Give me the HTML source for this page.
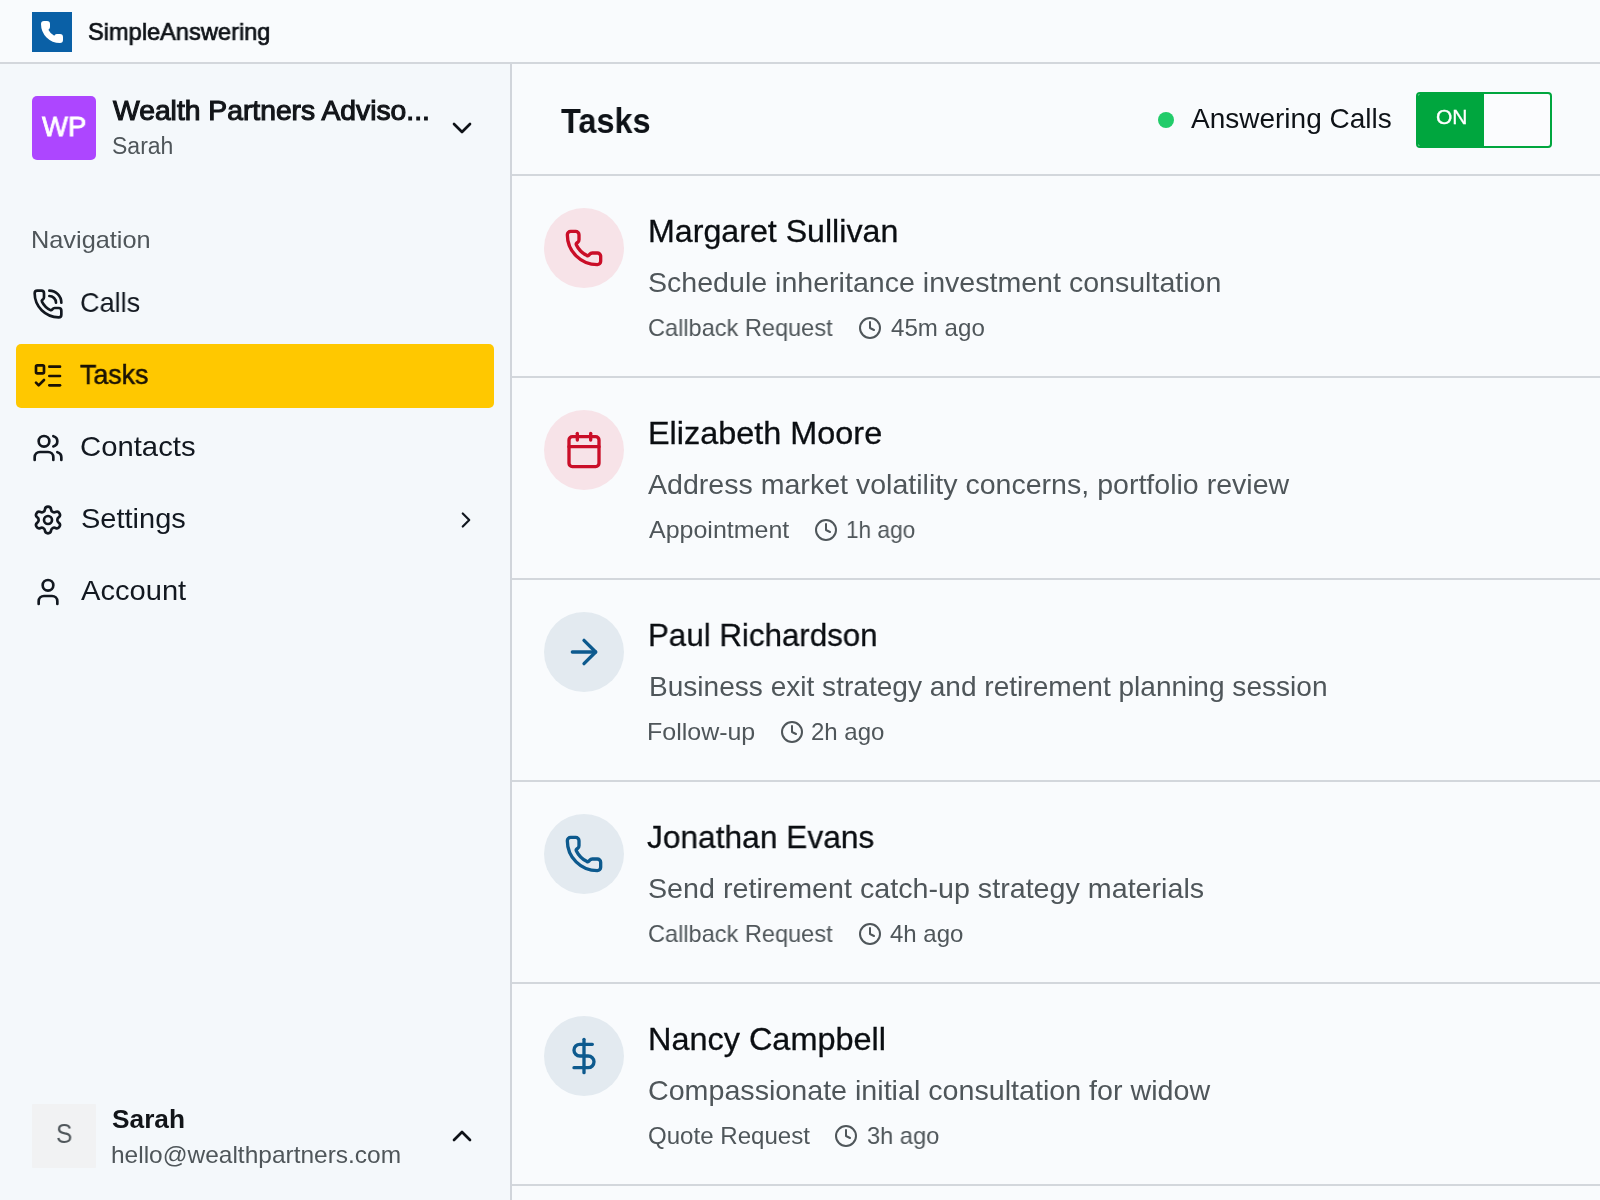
<!DOCTYPE html>
<html><head><meta charset="utf-8"><title>SimpleAnswering - Tasks</title>
<style>
html,body{margin:0;padding:0;width:1600px;height:1200px;overflow:hidden;background:#f9fbfd;font-family:"Liberation Sans", sans-serif;}
.t{position:absolute;white-space:nowrap;transform-origin:0 0;will-change:transform;}
.ic{position:absolute;overflow:visible;}
#hdr{position:absolute;left:0;top:0;width:1600px;height:62px;background:#f9fbfd;border-bottom:2px solid #d3d7dc;}
#logo{position:absolute;left:32px;top:12px;width:40px;height:40px;background:#0a60a6;}
#side{position:absolute;left:0;top:64px;width:510px;height:1136px;background:#f4f8fb;border-right:2px solid #d1d5db;}
#org{position:absolute;left:32px;top:96px;width:64px;height:64px;border-radius:5px;background:#ad46ff;}
#hl{position:absolute;left:16px;top:344px;width:478px;height:64px;border-radius:5px;background:#ffc800;}
#uav{position:absolute;left:32px;top:1104px;width:64px;height:64px;border-radius:1px;background:#f1f2f3;}
#mh{position:absolute;left:512px;top:174px;width:1088px;height:2px;background:#d3d7dc;}
.rb{position:absolute;left:512px;width:1088px;height:2px;background:#d3d7dc;}
.circ{position:absolute;left:544px;width:80px;height:80px;border-radius:50%;}
#dot{position:absolute;left:1158px;top:112px;width:16px;height:16px;border-radius:50%;background:#22cc6a;}
#tog{position:absolute;left:1416px;top:92px;width:132px;height:52px;border:2px solid #00a63e;border-radius:4px;background:#fbfcfe;overflow:hidden;}
#togon{position:absolute;left:0;top:0;width:66px;height:52px;background:#00a63e;border-radius:2px 0 0 2px;}
</style></head><body>
<div id="hdr"></div>
<div id="logo"></div>
<div id="side"></div>
<div id="org"></div>
<div id="hl"></div>
<div id="uav"></div>
<div id="mh"></div>
<div class="rb" style="top:376px"></div><div class="rb" style="top:578px"></div><div class="rb" style="top:780px"></div><div class="rb" style="top:982px"></div><div class="rb" style="top:1184px"></div>
<div class="circ" style="top:208px;background:#f7e3e8"></div><div class="circ" style="top:410px;background:#f7e3e8"></div><div class="circ" style="top:612px;background:#e3eaf0"></div><div class="circ" style="top:814px;background:#e3eaf0"></div><div class="circ" style="top:1016px;background:#e3eaf0"></div>
<div id="dot"></div>
<div id="tog"><div id="togon"></div></div>
<svg class="ic" style="left:40px;top:20px;width:24px;height:24px" viewBox="0 0 24 24" fill="#ffffff" stroke="#ffffff" stroke-width="2" stroke-linecap="round" stroke-linejoin="round"><path d="M13.832 16.568a1 1 0 0 0 1.213-.303l.355-.465A2 2 0 0 1 17 15h3a2 2 0 0 1 2 2v3a2 2 0 0 1-2 2A18 18 0 0 1 2 4a2 2 0 0 1 2-2h3a2 2 0 0 1 2 2v3a2 2 0 0 1-.8 1.6l-.468.351a1 1 0 0 0-.292 1.233 14 14 0 0 0 6.392 6.384"/></svg><svg class="ic" style="left:446px;top:112px;width:32px;height:32px" viewBox="0 0 24 24" fill="none" stroke="#0e1217" stroke-width="2" stroke-linecap="round" stroke-linejoin="round"><path d="m6 9 6 6 6-6"/></svg><svg class="ic" style="left:32px;top:288px;width:32px;height:32px" viewBox="0 0 24 24" fill="none" stroke="#121820" stroke-width="2" stroke-linecap="round" stroke-linejoin="round"><path d="M13 2a9 9 0 0 1 9 9"/><path d="M13 6a5 5 0 0 1 5 5"/><path d="M13.832 16.568a1 1 0 0 0 1.213-.303l.355-.465A2 2 0 0 1 17 15h3a2 2 0 0 1 2 2v3a2 2 0 0 1-2 2A18 18 0 0 1 2 4a2 2 0 0 1 2-2h3a2 2 0 0 1 2 2v3a2 2 0 0 1-.8 1.6l-.468.351a1 1 0 0 0-.292 1.233 14 14 0 0 0 6.392 6.384"/></svg><svg class="ic" style="left:32px;top:360px;width:32px;height:32px" viewBox="0 0 24 24" fill="none" stroke="#1a1205" stroke-width="2" stroke-linecap="round" stroke-linejoin="round"><rect x="3" y="4" width="6" height="6" rx="1"/><path d="m3 17 2 2 4-4"/><path d="M13 5h8"/><path d="M13 12h8"/><path d="M13 19h8"/></svg><svg class="ic" style="left:32px;top:432px;width:32px;height:32px" viewBox="0 0 24 24" fill="none" stroke="#121820" stroke-width="2" stroke-linecap="round" stroke-linejoin="round"><path d="M16 21v-2a4 4 0 0 0-4-4H6a4 4 0 0 0-4 4v2"/><path d="M16 3.128a4 4 0 0 1 0 7.744"/><path d="M22 21v-2a4 4 0 0 0-3-3.87"/><circle cx="9" cy="7" r="4"/></svg><svg class="ic" style="left:32px;top:504px;width:32px;height:32px" viewBox="0 0 24 24" fill="none" stroke="#121820" stroke-width="2" stroke-linecap="round" stroke-linejoin="round"><path d="M9.671 4.136a2.34 2.34 0 0 1 4.659 0 2.34 2.34 0 0 0 3.319 1.915 2.34 2.34 0 0 1 2.33 4.033 2.34 2.34 0 0 0 0 3.831 2.34 2.34 0 0 1-2.33 4.033 2.34 2.34 0 0 0-3.319 1.915 2.34 2.34 0 0 1-4.659 0 2.34 2.34 0 0 0-3.32-1.915 2.34 2.34 0 0 1-2.33-4.033 2.34 2.34 0 0 0 0-3.831A2.34 2.34 0 0 1 6.35 6.051a2.34 2.34 0 0 0 3.319-1.915"/><circle cx="12" cy="12" r="3"/></svg><svg class="ic" style="left:32px;top:576px;width:32px;height:32px" viewBox="0 0 24 24" fill="none" stroke="#121820" stroke-width="2" stroke-linecap="round" stroke-linejoin="round"><path d="M19 21v-2a4 4 0 0 0-4-4H9a4 4 0 0 0-4 4v2"/><circle cx="12" cy="7" r="4"/></svg><svg class="ic" style="left:453px;top:507px;width:26px;height:26px" viewBox="0 0 24 24" fill="none" stroke="#121820" stroke-width="2" stroke-linecap="round" stroke-linejoin="round"><path d="m9 18 6-6-6-6"/></svg><svg class="ic" style="left:446px;top:1120px;width:32px;height:32px" viewBox="0 0 24 24" fill="none" stroke="#0e1217" stroke-width="2" stroke-linecap="round" stroke-linejoin="round"><path d="m18 15-6-6-6 6"/></svg><svg class="ic" style="left:564px;top:228px;width:40px;height:40px" viewBox="0 0 24 24" fill="none" stroke="#ca0e28" stroke-width="2" stroke-linecap="round" stroke-linejoin="round"><path d="M13.832 16.568a1 1 0 0 0 1.213-.303l.355-.465A2 2 0 0 1 17 15h3a2 2 0 0 1 2 2v3a2 2 0 0 1-2 2A18 18 0 0 1 2 4a2 2 0 0 1 2-2h3a2 2 0 0 1 2 2v3a2 2 0 0 1-.8 1.6l-.468.351a1 1 0 0 0-.292 1.233 14 14 0 0 0 6.392 6.384"/></svg><svg class="ic" style="left:858.15px;top:316px;width:24px;height:24px" viewBox="0 0 24 24" fill="none" stroke="#4f565a" stroke-width="2" stroke-linecap="round" stroke-linejoin="round"><circle cx="12" cy="12" r="10"/><polyline points="12 6 12 12 16 14"/></svg><svg class="ic" style="left:564px;top:430px;width:40px;height:40px" viewBox="0 0 24 24" fill="none" stroke="#ca0e28" stroke-width="2" stroke-linecap="round" stroke-linejoin="round"><path d="M8 2v4"/><path d="M16 2v4"/><rect width="18" height="18" x="3" y="4" rx="2"/><path d="M3 10h18"/></svg><svg class="ic" style="left:813.75px;top:518px;width:24px;height:24px" viewBox="0 0 24 24" fill="none" stroke="#4f565a" stroke-width="2" stroke-linecap="round" stroke-linejoin="round"><circle cx="12" cy="12" r="10"/><polyline points="12 6 12 12 16 14"/></svg><svg class="ic" style="left:564px;top:632px;width:40px;height:40px" viewBox="0 0 24 24" fill="none" stroke="#0d5a8e" stroke-width="2" stroke-linecap="round" stroke-linejoin="round"><path d="M5 12h14"/><path d="m12 5 7 7-7 7"/></svg><svg class="ic" style="left:779.65px;top:720px;width:24px;height:24px" viewBox="0 0 24 24" fill="none" stroke="#4f565a" stroke-width="2" stroke-linecap="round" stroke-linejoin="round"><circle cx="12" cy="12" r="10"/><polyline points="12 6 12 12 16 14"/></svg><svg class="ic" style="left:564px;top:834px;width:40px;height:40px" viewBox="0 0 24 24" fill="none" stroke="#0d5a8e" stroke-width="2" stroke-linecap="round" stroke-linejoin="round"><path d="M13.832 16.568a1 1 0 0 0 1.213-.303l.355-.465A2 2 0 0 1 17 15h3a2 2 0 0 1 2 2v3a2 2 0 0 1-2 2A18 18 0 0 1 2 4a2 2 0 0 1 2-2h3a2 2 0 0 1 2 2v3a2 2 0 0 1-.8 1.6l-.468.351a1 1 0 0 0-.292 1.233 14 14 0 0 0 6.392 6.384"/></svg><svg class="ic" style="left:857.5px;top:922px;width:24px;height:24px" viewBox="0 0 24 24" fill="none" stroke="#4f565a" stroke-width="2" stroke-linecap="round" stroke-linejoin="round"><circle cx="12" cy="12" r="10"/><polyline points="12 6 12 12 16 14"/></svg><svg class="ic" style="left:564px;top:1036px;width:40px;height:40px" viewBox="0 0 24 24" fill="none" stroke="#0d5a8e" stroke-width="2" stroke-linecap="round" stroke-linejoin="round"><line x1="12" x2="12" y1="2" y2="22"/><path d="M17 5H9.5a3.5 3.5 0 0 0 0 7h5a3.5 3.5 0 0 1 0 7H6"/></svg><svg class="ic" style="left:834.35px;top:1124px;width:24px;height:24px" viewBox="0 0 24 24" fill="none" stroke="#4f565a" stroke-width="2" stroke-linecap="round" stroke-linejoin="round"><circle cx="12" cy="12" r="10"/><polyline points="12 6 12 12 16 14"/></svg>
<div class="t" style="left:88.02px;top:20.18px;font-size:24px;line-height:24px;font-weight:400;color:#0e1217;transform:scaleX(0.9836);-webkit-text-stroke:0.7px #0e1217;">SimpleAnswering</div>
<div class="t" style="left:113.00px;top:96.79px;font-size:28px;line-height:28px;font-weight:400;color:#121519;transform:scaleX(1.0096);-webkit-text-stroke:1.1px #121519;">Wealth Partners Adviso...</div>
<div class="t" style="left:112.00px;top:135.03px;font-size:23px;line-height:23px;font-weight:400;color:#4f565a;">Sarah</div>
<div class="t" style="left:30.89px;top:228.18px;font-size:24px;line-height:24px;font-weight:400;color:#4f565a;transform:scaleX(1.0545);">Navigation</div>
<div class="t" style="left:80.03px;top:288.79px;font-size:28px;line-height:28px;font-weight:400;color:#121820;transform:scaleX(0.9667);">Calls</div>
<div class="t" style="left:79.54px;top:360.79px;font-size:28px;line-height:28px;font-weight:400;color:#1a1205;transform:scaleX(0.9571);-webkit-text-stroke:0.5px #1a1205;">Tasks</div>
<div class="t" style="left:79.75px;top:432.79px;font-size:28px;line-height:28px;font-weight:400;color:#121820;transform:scaleX(1.0459);">Contacts</div>
<div class="t" style="left:80.66px;top:504.79px;font-size:28px;line-height:28px;font-weight:400;color:#121820;transform:scaleX(1.0354);">Settings</div>
<div class="t" style="left:80.80px;top:576.79px;font-size:28px;line-height:28px;font-weight:400;color:#121820;transform:scaleX(1.0396);">Account</div>
<div class="t" style="left:56.09px;top:1121.14px;font-size:27px;line-height:27px;font-weight:400;color:#4f565a;transform:scaleX(0.9062);">S</div>
<div class="t" style="left:42.10px;top:112.79px;font-size:28px;line-height:28px;font-weight:400;color:#ffffff;transform:scaleX(0.9818);-webkit-text-stroke:0.8px #ffffff;">WP</div>
<div class="t" style="left:111.99px;top:1106.49px;font-size:26px;line-height:26px;font-weight:700;color:#121519;transform:scaleX(1.0107);">Sarah</div>
<div class="t" style="left:110.96px;top:1142.68px;font-size:24px;line-height:24px;font-weight:400;color:#4f565a;transform:scaleX(1.0196);">hello@wealthpartners.com</div>
<div class="t" style="left:560.50px;top:102.87px;font-size:35px;line-height:35px;font-weight:700;color:#0e1217;transform:scaleX(0.9263);">Tasks</div>
<div class="t" style="left:1191.40px;top:104.79px;font-size:28px;line-height:28px;font-weight:400;color:#0e1217;">Answering Calls</div>
<div class="t" style="left:1435.95px;top:107.17px;font-size:20px;line-height:20px;font-weight:400;color:#ffffff;transform:scaleX(1.0500);-webkit-text-stroke:0.3px #ffffff;">ON</div>
<div class="t" style="left:647.73px;top:215.41px;font-size:32px;line-height:32px;font-weight:400;color:#0b0e12;transform:scaleX(1.0051);-webkit-text-stroke:0.3px #0b0e12;">Margaret Sullivan</div>
<div class="t" style="left:648.38px;top:268.79px;font-size:28px;line-height:28px;font-weight:400;color:#4f565a;transform:scaleX(1.0204);">Schedule inheritance investment consultation</div>
<div class="t" style="left:648.32px;top:316.18px;font-size:24px;line-height:24px;font-weight:400;color:#4f565a;transform:scaleX(0.9813);">Callback Request</div>
<div class="t" style="left:891.00px;top:316.18px;font-size:24px;line-height:24px;font-weight:400;color:#4f565a;transform:scaleX(1.0043);">45m ago</div>
<div class="t" style="left:647.86px;top:417.41px;font-size:32px;line-height:32px;font-weight:400;color:#0b0e12;transform:scaleX(1.0126);-webkit-text-stroke:0.3px #0b0e12;">Elizabeth Moore</div>
<div class="t" style="left:648.25px;top:470.79px;font-size:28px;line-height:28px;font-weight:400;color:#4f565a;transform:scaleX(1.0199);">Address market volatility concerns, portfolio review</div>
<div class="t" style="left:649.30px;top:518.18px;font-size:24px;line-height:24px;font-weight:400;color:#4f565a;transform:scaleX(1.0407);">Appointment</div>
<div class="t" style="left:845.91px;top:518.18px;font-size:24px;line-height:24px;font-weight:400;color:#4f565a;transform:scaleX(0.9437);">1h ago</div>
<div class="t" style="left:647.97px;top:619.41px;font-size:32px;line-height:32px;font-weight:400;color:#0b0e12;transform:scaleX(0.9776);-webkit-text-stroke:0.3px #0b0e12;">Paul Richardson</div>
<div class="t" style="left:648.50px;top:672.79px;font-size:28px;line-height:28px;font-weight:400;color:#4f565a;transform:scaleX(1.0022);">Business exit strategy and retirement planning session</div>
<div class="t" style="left:647.22px;top:720.18px;font-size:24px;line-height:24px;font-weight:400;color:#4f565a;transform:scaleX(1.0406);">Follow-up</div>
<div class="t" style="left:810.50px;top:720.18px;font-size:24px;line-height:24px;font-weight:400;color:#4f565a;">2h ago</div>
<div class="t" style="left:647.26px;top:821.41px;font-size:32px;line-height:32px;font-weight:400;color:#0b0e12;transform:scaleX(0.9901);-webkit-text-stroke:0.3px #0b0e12;">Jonathan Evans</div>
<div class="t" style="left:648.28px;top:874.79px;font-size:28px;line-height:28px;font-weight:400;color:#4f565a;transform:scaleX(1.0239);">Send retirement catch-up strategy materials</div>
<div class="t" style="left:648.32px;top:922.18px;font-size:24px;line-height:24px;font-weight:400;color:#4f565a;transform:scaleX(0.9813);">Callback Request</div>
<div class="t" style="left:890.25px;top:922.18px;font-size:24px;line-height:24px;font-weight:400;color:#4f565a;transform:scaleX(0.9945);">4h ago</div>
<div class="t" style="left:647.86px;top:1023.41px;font-size:32px;line-height:32px;font-weight:400;color:#0b0e12;transform:scaleX(1.0135);-webkit-text-stroke:0.3px #0b0e12;">Nancy Campbell</div>
<div class="t" style="left:648.28px;top:1076.79px;font-size:28px;line-height:28px;font-weight:400;color:#4f565a;transform:scaleX(1.0231);">Compassionate initial consultation for widow</div>
<div class="t" style="left:648.30px;top:1124.18px;font-size:24px;line-height:24px;font-weight:400;color:#4f565a;transform:scaleX(1.0031);">Quote Request</div>
<div class="t" style="left:866.51px;top:1124.18px;font-size:24px;line-height:24px;font-weight:400;color:#4f565a;transform:scaleX(0.9861);">3h ago</div>
</body></html>
